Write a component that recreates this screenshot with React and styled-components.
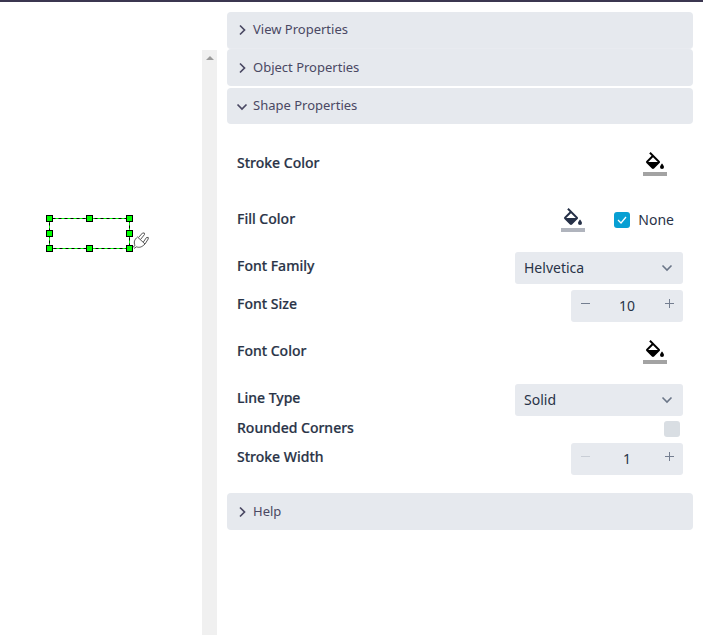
import React, { useState } from 'react';
import styled, { createGlobalStyle, css } from 'styled-components';

const GlobalStyle = createGlobalStyle`
  * { box-sizing: border-box; }
  body {
    margin: 0;
    background: #fff;
    color: #293347;
    font-family: "Noto Sans", sans-serif;
    font-size: 14px;
  }
  button, input, select { font: inherit; color: inherit; }
`;

const Page = styled.div`
  display: flex;
  min-height: 100vh;
  border-top: 2px solid #3b3650;
`;

const CanvasPane = styled.main`
  position: relative;
  flex: 0 0 202px;
`;

const SelectedShape = styled.svg`
  position: absolute;
  left: 44px;
  top: 210px;
`;

const ScrollTrack = styled.div`
  flex: 0 0 15px;
  margin-top: 48px;
  padding-top: 5px;
  background: #f0f0f0;
  text-align: center;
  line-height: 0;
`;

const Panel = styled.aside`
  flex: 1;
  min-width: 0;
  padding: 10px;
`;

const SectionHeader = styled.button`
  display: flex;
  align-items: center;
  gap: 4px;
  width: 100%;
  height: 37px;
  padding: 0 8px 2px;
  border: 0;
  border-radius: 4px;
  background: #e6e9ee;
  color: #4a4863;
  font-size: 13px;
  text-align: left;
  ${(p) => p.$joined && css`border-bottom: 1px solid #e9ebf0;`}
  ${(p) => p.$open && css`
    height: 36px;
    margin-top: 2px;
    padding-bottom: 3px;
  `}
`;

const Body = styled.div`
  padding: 12px 10px 13px;
`;

const Row = styled.div`
  display: flex;
  align-items: center;
  justify-content: space-between;
  height: ${(p) => p.$height}px;
`;

const Label = styled.label`
  padding-bottom: ${(p) => (p.$raised ? 4 : 2)}px;
  font-weight: 500;
  line-height: 20px;
  -webkit-text-stroke: 0.2px currentColor;
`;

const Controls = styled.div`
  display: flex;
  align-items: center;
  gap: 29px;
  padding-right: ${(p) => p.$inset || 0}px;
`;

const ColorButton = styled.button`
  width: 24px;
  height: 24px;
  padding: 0;
  border: 0;
  background: none;
  color: ${(p) => p.$color};
  line-height: 0;
`;

const CheckLabel = styled.label`
  display: flex;
  align-items: center;
  gap: 8px;
  line-height: 18px;
`;

const Checkbox = styled.input.attrs({ type: 'checkbox' })`
  appearance: none;
  width: 16px;
  height: 16px;
  margin: 0;
  border-radius: 3px;
  background: #d9dee3;
  &:checked {
    background: #079fd3 url("data:image/svg+xml,%3Csvg xmlns='http://www.w3.org/2000/svg' viewBox='0 0 16 16'%3E%3Cpath d='M4 8l3 3 5-6' fill='none' stroke='white' stroke-width='1.3'/%3E%3C/svg%3E");
  }
`;

const SelectBox = styled.div`
  display: grid;
  align-items: center;
  width: 168px;
  height: 32px;
  border-radius: 3px;
  background: #e7eaef;
  & > * { grid-area: 1 / 1; }
  & > svg { justify-self: end; margin-right: 10px; pointer-events: none; }
`;

const Select = styled.select`
  appearance: none;
  width: 100%;
  height: 32px;
  padding: 0 28px 2px 9px;
  border: 0;
  background: none;
`;

const Stepper = styled.div`
  display: flex;
  width: 112px;
  height: 32px;
  border-radius: 3px;
  background: #e7eaef;
`;

const StepButton = styled.button`
  flex: 0 0 28px;
  padding: 0 0 5px;
  border: 0;
  background: none;
  color: #747e90;
  line-height: 0;
  &:disabled { color: #c9ced6; }
`;

const StepInput = styled.input`
  flex: 1;
  width: 0;
  padding: 0 0 2px;
  border: 0;
  background: none;
  text-align: center;
`;

function Chevron({ open }) {
  return (
    <svg width="14" height="14" viewBox="0 0 14 14" fill="none" stroke="currentColor" strokeWidth="1.7">
      <path d={open ? 'M2.5 6.5L7 11L11.5 6.5' : 'M5 3.5L9.5 8L5 12.5'} />
    </svg>
  );
}

function FillIcon() {
  return (
    <svg width="24" height="24" viewBox="0 0 24 24" fill="currentColor">
      <path d="M19 11.5s-2 2.17-2 3.5a2 2 0 0 0 4 0c0-1.33-2-3.5-2-3.5M5.21 10L10 5.21 14.79 10M16.56 8.94L7.62 0 6.21 1.41l2.38 2.38-5.15 5.15a1.49 1.49 0 0 0 0 2.12l5.5 5.5c.29.29.68.44 1.06.44s.77-.15 1.06-.44l5.5-5.5c.59-.56.59-1.53 0-2.12z" />
      <path d="M0 20h24v4H0z" fillOpacity="0.36" />
    </svg>
  );
}

function Shape() {
  const handles = [[5, 6], [45, 6], [85, 6], [5, 21], [85, 21], [5, 36], [45, 36], [85, 36]];
  return (
    <SelectedShape width="110" height="44" viewBox="0 0 110 44">
      <rect x="5.5" y="6.5" width="80" height="30" fill="none" stroke="#000" />
      <rect x="5.5" y="6.5" width="80" height="30" fill="none" stroke="#0f0" strokeDasharray="3 3" />
      <g transform="translate(88 20)" fill="#fff" stroke="#444" strokeWidth="0.9">
        <path d="M6.5 5.5L10.5 1Q13 .2 12.5 2.5L8.5 7.5M11 10.5L14.5 5.5Q17.2 4.6 16.2 7L13 12" />
        <path d="M0 16L3 13.5C1.5 10 2.5 7.5 5.5 5L13 12C10 15 7.5 16 4.5 14.8L2 16.5" />
      </g>
      {handles.map(([x, y]) => (
        <rect key={`${x}-${y}`} x={x - 2.5} y={y - 2.5} width="6" height="6" fill="#0f0" stroke="#000" />
      ))}
    </SelectedShape>
  );
}

function ColorControl({ id, label, color = '#000' }) {
  return <ColorButton id={id} type="button" aria-label={label} $color={color}><FillIcon /></ColorButton>;
}

function SelectControl({ id, options }) {
  return (
    <SelectBox>
      <Select id={id}>{options.map((o) => <option key={o}>{o}</option>)}</Select>
      <svg width="12" height="8" viewBox="0 0 12 8" fill="none" stroke="#6b7688" strokeWidth="1.6">
        <path d="M1.5 1.5L6 6L10.5 1.5" />
      </svg>
    </SelectBox>
  );
}

function NumberControl({ id, initial }) {
  const [value, setValue] = useState(initial);
  return (
    <Stepper>
      <StepButton type="button" aria-label="Decrease" disabled={value <= 1} onClick={() => setValue(value - 1)}>
        <svg width="9" height="9" fill="currentColor"><path d="M0 4h9v1H0z" /></svg>
      </StepButton>
      <StepInput id={id} value={value} onChange={(e) => setValue(Number(e.target.value) || 1)} />
      <StepButton type="button" aria-label="Increase" onClick={() => setValue(value + 1)}>
        <svg width="9" height="9" fill="currentColor"><path d="M0 4h9v1H0zM4 0h1v9H4z" /></svg>
      </StepButton>
    </Stepper>
  );
}

export default function App() {
  const [none, setNone] = useState(true);
  return (
    <>
      <GlobalStyle />
      <Page>
        <CanvasPane><Shape /></CanvasPane>
        <ScrollTrack>
          <svg width="8" height="4" viewBox="0 0 8 4"><path d="M4 0L8 4H0z" fill="#9b9b9b" /></svg>
        </ScrollTrack>
        <Panel>
          <SectionHeader type="button" $joined><Chevron />View Properties</SectionHeader>
          <SectionHeader type="button"><Chevron />Object Properties</SectionHeader>
          <SectionHeader type="button" $open><Chevron open />Shape Properties</SectionHeader>
          <Body>
            <Row $height={56}>
              <Label htmlFor="stroke-color">Stroke Color</Label>
              <Controls $inset={16}><ColorControl id="stroke-color" label="Stroke Color" /></Controls>
            </Row>
            <Row $height={56}>
              <Label htmlFor="fill-color">Fill Color</Label>
              <Controls $inset={9}>
                <ColorControl id="fill-color" label="Fill Color" color="#253047" />
                <CheckLabel>
                  <Checkbox checked={none} onChange={(e) => setNone(e.target.checked)} />
                  None
                </CheckLabel>
              </Controls>
            </Row>
            <Row $height={40}>
              <Label htmlFor="font-family" $raised>Font Family</Label>
              <SelectControl id="font-family" options={['Helvetica', 'Arial', 'Verdana']} />
            </Row>
            <Row $height={36}>
              <Label htmlFor="font-size" $raised>Font Size</Label>
              <NumberControl id="font-size" initial={10} />
            </Row>
            <Row $height={56}>
              <Label htmlFor="font-color">Font Color</Label>
              <Controls $inset={16}><ColorControl id="font-color" label="Font Color" /></Controls>
            </Row>
            <Row $height={40}>
              <Label htmlFor="line-type" $raised>Line Type</Label>
              <SelectControl id="line-type" options={['Solid', 'Dashed', 'Dotted']} />
            </Row>
            <Row $height={18}>
              <Label htmlFor="rounded">Rounded Corners</Label>
              <Controls $inset={3}><Checkbox id="rounded" /></Controls>
            </Row>
            <Row $height={42}>
              <Label htmlFor="stroke-width" $raised>Stroke Width</Label>
              <NumberControl id="stroke-width" initial={1} />
            </Row>
          </Body>
          <SectionHeader type="button"><Chevron />Help</SectionHeader>
        </Panel>
      </Page>
    </>
  );
}
